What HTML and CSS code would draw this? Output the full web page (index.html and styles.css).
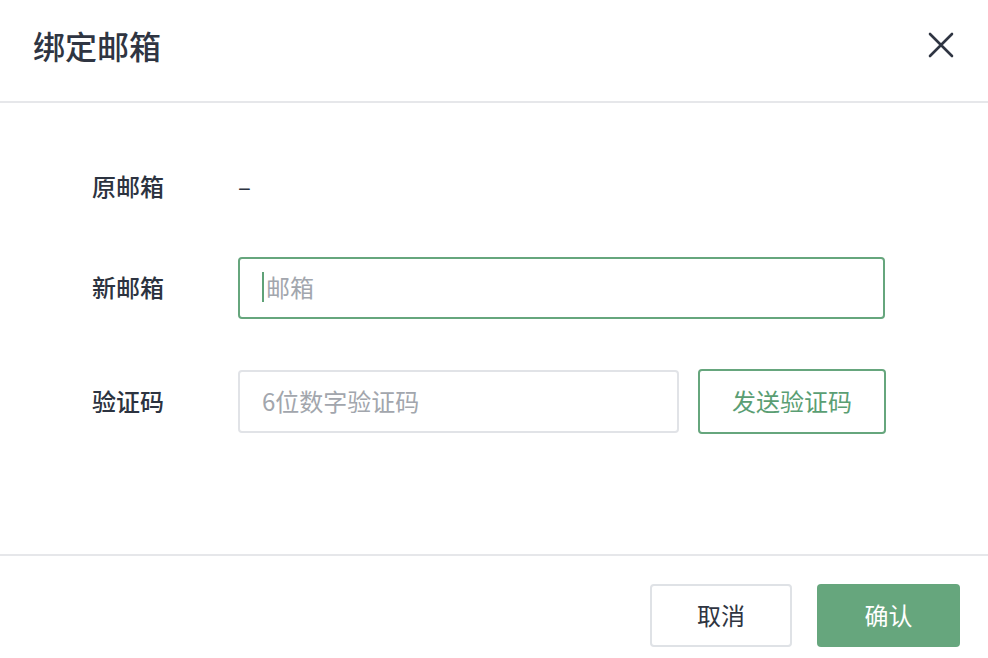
FILE: index.html
```html
<!DOCTYPE html>
<html lang="zh-CN">
<head>
<meta charset="utf-8">
<title>绑定邮箱</title>
<link rel="stylesheet" href="styles.css">
</head>
<body>
<div class="dialog">
  <div class="header">
    <div class="title">绑定邮箱</div>
    <button class="close" aria-label="关闭">
      <svg width="26" height="26" viewBox="0 0 26 26"><path d="M2 2L24 24M24 2L2 24" stroke="#2f3542" stroke-width="2.6" stroke-linecap="round" fill="none"/></svg>
    </button>
  </div>
  <div class="body">
    <div class="row row-1">
      <div class="label">原邮箱</div>
      <div class="value">–</div>
    </div>
    <div class="row row-2">
      <div class="label">新邮箱</div>
      <div class="input input-focus wide"><span class="caret"></span><span class="ph">邮箱</span></div>
    </div>
    <div class="row row-3">
      <div class="label">验证码</div>
      <div class="input code"><span class="ph">6位数字验证码</span></div>
      <button class="btn-send">发送验证码</button>
    </div>
  </div>
  <div class="footer">
    <button class="btn btn-cancel">取消</button>
    <button class="btn btn-ok">确认</button>
  </div>
</div>
</body>
</html>
```
FILE: styles.css
```css
* { box-sizing: border-box; }
html, body { margin: 0; padding: 0; background: #fff; }
body {
  font-family: "Noto Sans CJK SC", "Noto Sans", "Liberation Sans", sans-serif;
  color: #2c3340;
  width: 988px;
  height: 658px;
  overflow: hidden;
}
.dialog { width: 988px; }
.header {
  height: 103px;
  border-bottom: 2px solid #e6e7ea;
  display: flex;
  align-items: center;
  justify-content: space-between;
  padding: 0 33px 12px 33px;
}
.title {
  font-size: 32px;
  font-weight: 500;
  color: #2f3542;
  line-height: 40px;
}
.close {
  border: 0;
  background: none;
  padding: 0;
  margin-right: 1px;
  width: 26px;
  height: 26px;
  display: flex;
}
.body {
  height: 453px;
  padding: 53px 0 0 92px;
  border-bottom: 2px solid #e6e7ea;
}
.row { display: flex; align-items: center; }
.row-1 { height: 62px; margin-bottom: 39px; }
.row-2 { height: 62px; margin-bottom: 50px; }
.row-3 { height: 65px; }
.label {
  width: 146px;
  font-size: 24px;
  font-weight: 500;
  color: #2c3340;
  line-height: 32px;
  padding-bottom: 2px;
}
.value { font-size: 24px; color: #2c3340; line-height: 32px; padding-bottom: 2px; }
.input {
  height: 62px;
  border: 2px solid #e1e3e7;
  border-radius: 4px;
  display: flex;
  align-items: center;
  padding-left: 22px;
  padding-bottom: 2px;
  font-size: 24px;
}
.input-focus { border-color: #66a67d; }
.wide { width: 647px; }
.code { width: 441px; height: 63px; }
.caret {
  width: 2px;
  height: 30px;
  background: #5fa277;
  margin-right: 2px;
}
.ph { color: #a2a6ad; line-height: 32px; }
.btn-send {
  margin-left: 19px;
  width: 188px;
  height: 65px;
  border: 2px solid #66a67d;
  border-radius: 4px;
  background: #fff;
  color: #5a9e73;
  font-family: inherit;
  font-size: 24px;
  padding: 0 0 2px 0;
}
.footer {
  display: flex;
  justify-content: flex-end;
  gap: 25px;
  padding: 28px 28px 0 0;
}
.btn {
  width: 143px;
  height: 63px;
  border-radius: 4px;
  font-family: inherit;
  font-size: 24px;
  padding: 0 0 2px 0;
}
.btn-cancel {
  background: #fff;
  border: 2px solid #dfe2e6;
  color: #2f3542;
  width: 142px;
}
.btn-ok {
  background: #66a67d;
  border: 0;
  color: #fff;
}
```
